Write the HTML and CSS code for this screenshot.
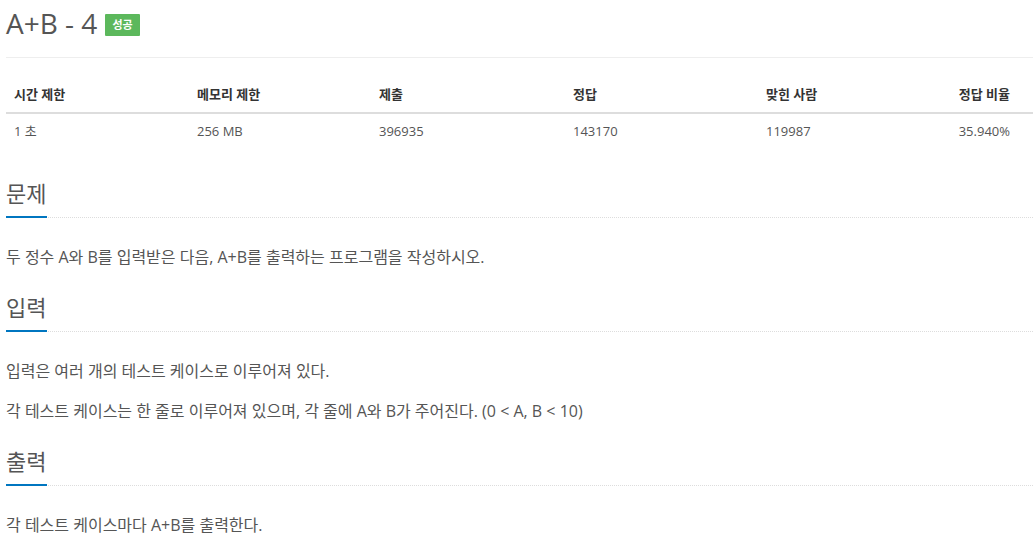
FILE: index.html
```html
<!DOCTYPE html>
<html lang="ko">
<head>
<meta charset="utf-8">
<title>A+B - 4</title>
<link rel="stylesheet" href="styles.css">
</head>
<body>
<div class="page">
  <div class="page-header">
    <h1 class="title">A+B - 4 <span class="badge">성공</span></h1>
  </div>

  <table class="info">
    <colgroup>
      <col class="c1"><col class="c2"><col class="c3"><col class="c4"><col class="c5"><col class="c6">
    </colgroup>
    <thead>
      <tr>
        <th>시간 제한</th>
        <th>메모리 제한</th>
        <th>제출</th>
        <th>정답</th>
        <th>맞힌 사람</th>
        <th class="last">정답 비율</th>
      </tr>
    </thead>
    <tbody>
      <tr>
        <td>1 초</td>
        <td>256 MB</td>
        <td>396935</td>
        <td>143170</td>
        <td>119987</td>
        <td class="last">35.940%</td>
      </tr>
    </tbody>
  </table>

  <section class="section">
    <div class="headline"><h2>문제</h2></div>
    <div class="text">
      <p>두 정수 A와 B를 입력받은 다음, A+B를 출력하는 프로그램을 작성하시오.</p>
    </div>
  </section>

  <section class="section">
    <div class="headline"><h2>입력</h2></div>
    <div class="text">
      <p>입력은 여러 개의 테스트 케이스로 이루어져 있다.</p>
      <p>각 테스트 케이스는 한 줄로 이루어져 있으며, 각 줄에 A와 B가 주어진다. (0 &lt; A, B &lt; 10)</p>
    </div>
  </section>

  <section class="section">
    <div class="headline"><h2>출력</h2></div>
    <div class="text">
      <p>각 테스트 케이스마다 A+B를 출력한다.</p>
    </div>
  </section>
</div>
</body>
</html>
```

FILE: styles.css
```css
html, body {
  margin: 0;
  padding: 0;
  background: #fff;
}

body {
  font-family: "Open Sans", "Noto Sans CJK KR", sans-serif;
  color: #555;
  font-size: 13px;
  line-height: 1.42857;
}

.page {
  padding-left: 6px;
}

.page-header {
  border-bottom: 1px solid #eee;
  padding: 2px 0 13px;
}

.title {
  margin: 0;
  font-size: 28px;
  font-weight: 400;
  line-height: 42px;
  color: #555;
  display: flex;
  align-items: center;
}

.badge {
  display: inline-block;
  background: #5cb85c;
  color: #fff;
  font-size: 11px;
  font-weight: 700;
  line-height: 14px;
  padding: 4px 7px;
  margin-left: 8px;
  margin-top: 4px;
  border-radius: 1px;
}

.info {
  width: 1027px;
  border-collapse: collapse;
  table-layout: fixed;
  margin-top: 18px;
}

.c1 { width: 183px; }
.c2 { width: 182px; }
.c3 { width: 194px; }
.c4 { width: 193px; }
.c5 { width: 170px; }
.c6 { width: 105px; }

.info th,
.info td {
  text-align: left;
  padding: 8px 8px;
  font-size: 13px;
  line-height: 20px;
  white-space: nowrap;
}

.info th {
  font-weight: 700;
  color: #333;
  border-bottom: 2px solid #ddd;
}

.info td {
  color: #555;
  padding-top: 7px;
}

.info .last {
  text-align: right;
  padding-right: 23px;
}

.headline {
  border-bottom: 1px dotted #ddd;
  margin: 24px 0 0;
  line-height: 0;
}

.section:first-of-type .headline {
  margin-top: 29px;
}

.headline h2 {
  display: inline-block;
  margin: 0 0 -1px;
  font-size: 22px;
  font-weight: 400;
  line-height: 30px;
  color: #555;
  padding: 0 1px 8px 0;
  border-bottom: 2px solid #0076c0;
}

.text {
  padding-top: 28px;
}

.text p {
  margin: 0 0 18px;
  font-size: 16px;
  line-height: 22px;
  color: #555;
}

.text p:last-child {
  margin-bottom: 0;
}
```
